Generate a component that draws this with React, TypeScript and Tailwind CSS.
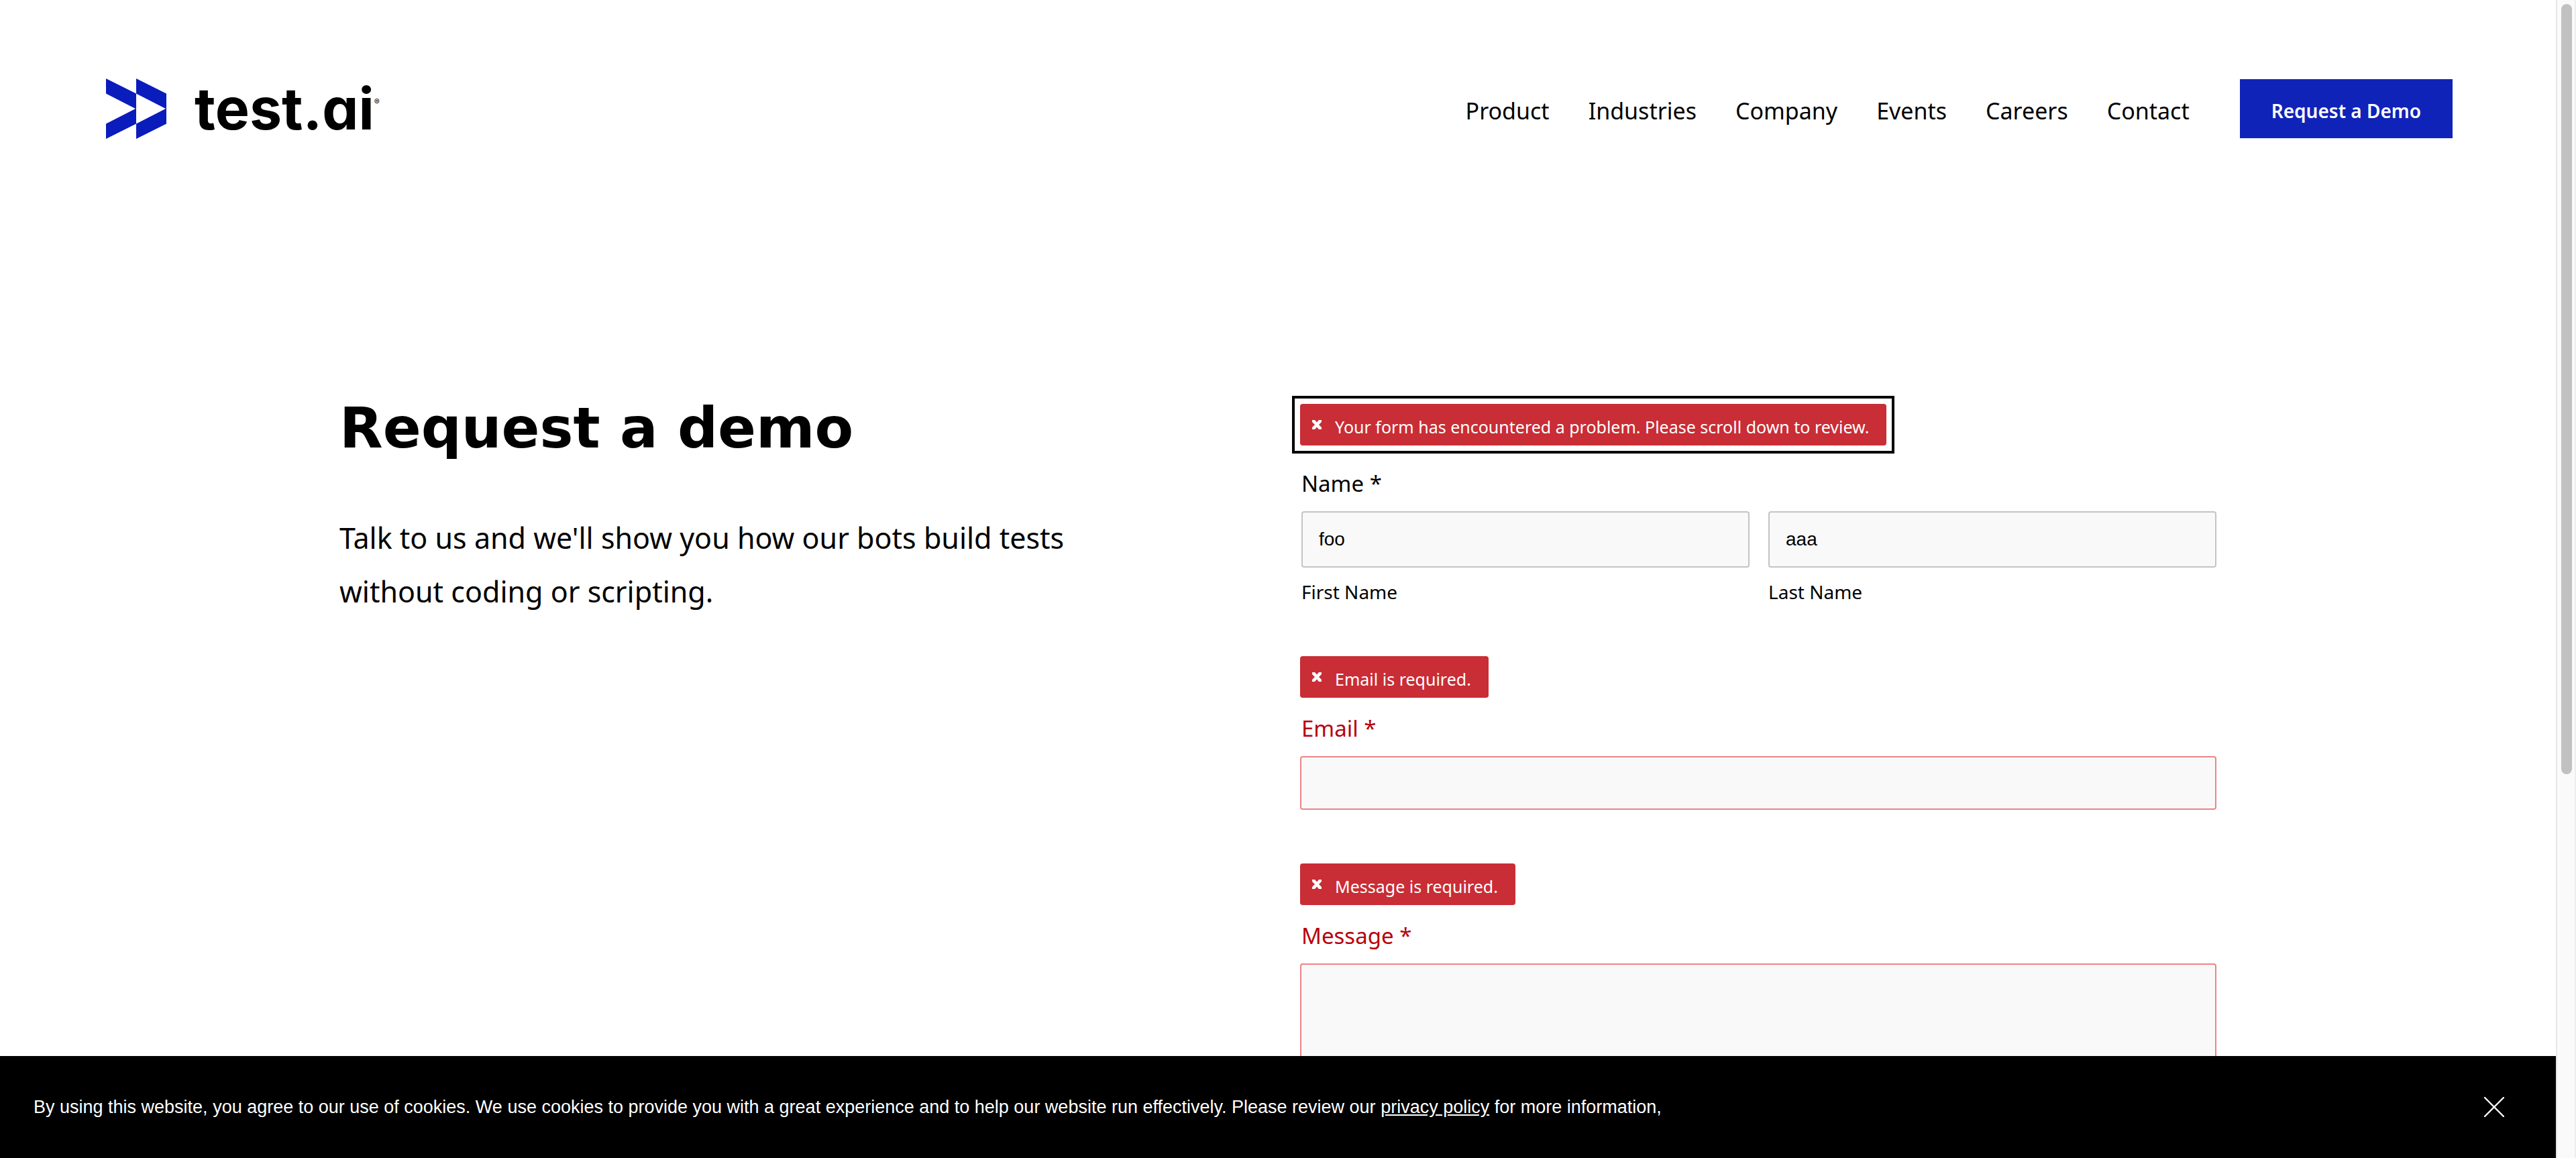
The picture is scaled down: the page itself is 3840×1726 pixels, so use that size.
import { useId, type ReactNode } from "react";

const navItems = ["Product", "Industries", "Company", "Events", "Careers", "Contact"];

function Logo() {
  return (
    <a href="#home" aria-label="test.ai home" className="flex items-center">
      <svg viewBox="0 0 90 90" className="size-[90px]" fill="#0b1cbc" aria-hidden="true">
        <path d="M0 0 45 22.5V67.5L0 90V67.5L44 45 0 22.5Z" />
        <path d="M45 0 90 22.5V67.5L45 90V67.5L89 45 45 22.5Z" />
      </svg>
      <span className="ml-[42px] flex items-center font-[Inter,sans-serif] font-bold leading-[90px] text-black">
        <span className="text-[86px] [font-feature-settings:'cv11']">test.ai</span>
        <span className="pb-5 text-[12px] font-normal leading-4">®</span>
      </span>
    </a>
  );
}

function Header() {
  return (
    <header className="flex items-center justify-between pt-[117px] pr-[154px] pl-[158px]">
      <Logo />
      <div className="flex items-center gap-[75px]">
        <nav className="flex gap-[58px] pt-1.5 text-[34px] leading-10">
          {navItems.map((item) => (
            <a key={item} href={`#${item.toLowerCase()}`}>
              {item}
            </a>
          ))}
        </nav>
        <a
          href="#demo"
          className="flex h-[88px] items-center bg-[#1023b8] px-[47px] pt-1.5 text-[28px] leading-10 font-semibold text-white"
        >
          Request a Demo
        </a>
      </div>
    </header>
  );
}

function Alert({ children }: { children: ReactNode }) {
  return (
    <div role="alert" className="flex h-[62px] w-fit items-center gap-5 rounded bg-[#c92d35] pr-[26px] pl-[18px] text-white">
      <svg viewBox="0 0 14 14" className="size-3.5" fill="currentColor" aria-hidden="true">
        <path d="M0 0H4L7 3.6 10 0H14V3L10 7 14 11V14H10L7 10.4 4 14H0V11L4 7 0 3Z" />
      </svg>
      <span className="pt-1.5 text-[25px] leading-8">{children}</span>
    </div>
  );
}

function NameField({ caption, value }: { caption: string; value: string }) {
  const id = useId();
  return (
    <div className="flex flex-1 flex-col gap-4">
      <input
        id={id}
        type="text"
        defaultValue={value}
        className="h-[84px] w-full rounded border-2 border-[#c4c4c4] bg-[#f9f9f9] px-6 font-['Liberation_Sans',sans-serif] text-[28px] text-black"
      />
      <label htmlFor={id} className="text-[28px] leading-10">
        {caption}
      </label>
    </div>
  );
}

function ErrorField({ label, multiline = false }: { label: string; multiline?: boolean }) {
  const id = useId();
  return (
    <div>
      <Alert>{label} is required.</Alert>
      <label htmlFor={id} className="mt-[26px] mb-[21px] block pl-0.5 text-[33px] leading-10 text-[#b8000b]">
        {label} *
      </label>
      {multiline ? (
        <textarea id={id} className="block h-[200px] w-full resize-none rounded border-2 border-[#ec8488] bg-[#f9f9f9] p-6 text-[28px]" />
      ) : (
        <input id={id} type="email" className="block h-20 w-full rounded border-2 border-[#ec8488] bg-[#f9f9f9] px-6 text-[28px]" />
      )}
    </div>
  );
}

function DemoForm() {
  return (
    <form>
      <div className="-m-3 w-fit border-4 border-black p-2">
        <Alert>Your form has encountered a problem. Please scroll down to review.</Alert>
      </div>
      <fieldset className="mb-[76px] pl-0.5">
        <legend className="pt-[37px] pb-[21px] text-[33px] leading-10">Name *</legend>
        <div className="flex gap-7">
          <NameField caption="First Name" value="foo" />
          <NameField caption="Last Name" value="aaa" />
        </div>
      </fieldset>
      <div className="flex flex-col gap-20">
        <ErrorField label="Email" />
        <ErrorField label="Message" multiline />
      </div>
    </form>
  );
}

function CookieBanner() {
  return (
    <footer className="flex h-[152px] shrink-0 items-center justify-between bg-black pr-[77px] pl-[50px] text-white">
      <p className="font-['Liberation_Sans',sans-serif] text-[27px] leading-10">
        By using this website, you agree to our use of cookies. We use cookies to provide you with a great experience and to help
        our website run effectively. Please review our{" "}
        <a href="#privacy" className="underline">
          privacy policy
        </a>{" "}
        for more information,
      </p>
      <button type="button" aria-label="Close">
        <svg viewBox="0 0 30 30" className="size-[30px]" aria-hidden="true">
          <path d="M1 1 29 29M29 1 1 29" stroke="currentColor" strokeWidth="2.4" strokeLinecap="round" />
        </svg>
      </button>
    </footer>
  );
}

export default function App() {
  return (
    <div className="flex h-screen overflow-hidden bg-white font-['Noto_Sans',sans-serif] text-black">
      <div className="flex min-w-0 flex-1 flex-col">
        <div className="min-h-0 flex-1 overflow-hidden">
          <Header />
          <main className="mx-auto grid max-w-[2798px] grid-cols-2 gap-x-[66px] pt-[395px]">
            <section>
              <h1 className="font-['DejaVu_Sans',sans-serif] text-[84px] leading-[72px] font-bold">Request a demo</h1>
              <p className="mt-[88px] max-w-[1160px] text-[43px] leading-[80px]">
                Talk to us and we'll show you how our bots build tests without coding or scripting.
              </p>
            </section>
            <DemoForm />
          </main>
        </div>
        <CookieBanner />
      </div>
      <div className="w-[30px] shrink-0 border-r-2 border-l-2 border-r-[#eeeeee] border-l-[#e6e6e6] bg-[#fafafa] px-1 py-1.5" aria-hidden="true">
        <div className="ml-auto h-[67%] w-4 rounded-full bg-[#c1c1c1]" />
      </div>
    </div>
  );
}
